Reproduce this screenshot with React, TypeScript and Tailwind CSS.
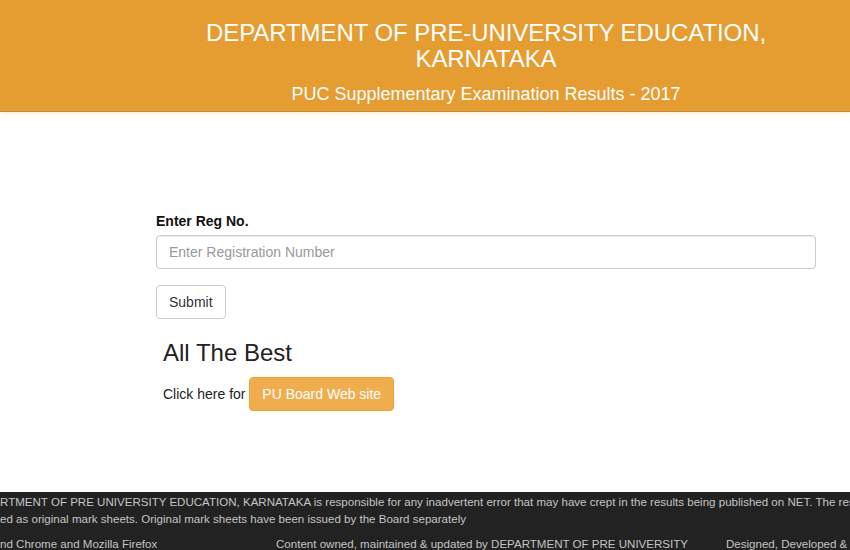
import React from "react";

export default function App() {
  const font = { fontFamily: '"Liberation Sans", Arial, Helvetica, sans-serif' };
  return (
    <div className="w-[850px] h-[550px] bg-white overflow-hidden flex flex-col text-[#333]" style={font}>
      <header className="h-[112px] shrink-0 bg-[#e59c31] border-b border-[#c08b3e] shadow-[0_2px_4px_rgba(250,220,120,0.35)] pt-[20px] pl-[122px] text-white text-center">
        <h1 className="text-[24px] leading-[26.4px] font-normal tracking-[-0.08px]">
          DEPARTMENT OF PRE-UNIVERSITY EDUCATION,
          <br />
          KARNATAKA
        </h1>
        <p className="mt-[12px] text-[18px] leading-[19.8px]">PUC Supplementary Examination Results - 2017</p>
      </header>

      <main className="flex-1 pl-[156px] pr-[34px] pt-[99px]">
        <label className="block text-[14px] leading-[20px] font-bold text-[#111] mb-[4px]">Enter Reg No.</label>
        <input
          type="text"
          placeholder="Enter Registration Number"
          className="block w-full h-[34px] px-[12px] text-[14px] border border-[#ccc] rounded-[4px] placeholder:text-[#999] outline-none shadow-[inset_0_1px_1px_rgba(0,0,0,0.075)]"
          style={font}
        />
        <button
          className="mt-[16px] h-[34px] px-[12px] text-[14px] border border-[#ccc] rounded-[4px] bg-white text-[#333]"
          style={font}
        >
          Submit
        </button>
        <div className="pl-[7px]">
          <h3 className="mt-[21px] text-[24px] leading-[26.4px] font-normal text-[#222]">All The Best</h3>
          <div className="mt-[11px] flex items-center text-[14px] text-[#222]">
            <span className="whitespace-pre">Click here for </span>
            <a className="h-[34px] px-[12px] flex items-center bg-[#f0ad4e] border border-[#eea236] rounded-[4px] text-white">
              PU Board Web site
            </a>
          </div>
        </div>
      </main>

      <footer className="h-[58px] shrink-0 bg-[#222] text-[#c4c4c4] text-[11.55px] leading-[17px] overflow-hidden pt-[2px]">
        <div className="flex whitespace-nowrap">
          <div className="w-0 flex justify-end">The DEPA</div>
          <div>RTMENT OF PRE UNIVERSITY EDUCATION, KARNATAKA is responsible for any inadvertent error that may have crept in the results being published on NET. The results published on net are for immediate information to the examinees.</div>
        </div>
        <div className="flex whitespace-nowrap">
          <div className="w-0 flex justify-end">These cannot be treat</div>
          <div>ed as original mark sheets. Original mark sheets have been issued by the Board separately</div>
        </div>
        <div className="flex whitespace-nowrap mt-[8px]">
          <div className="w-[276px] shrink-0 flex">
            <div className="w-0 flex justify-end">Best viewed in Internet Explorer 10+ a</div>
            <div>nd Chrome and Mozilla Firefox</div>
          </div>
          <div className="w-[450px] shrink-0">Content owned, maintained &amp; updated by DEPARTMENT OF PRE UNIVERSITY</div>
          <div>Designed, Developed &amp; Hosted by NIC</div>
        </div>
      </footer>
    </div>
  );
}
